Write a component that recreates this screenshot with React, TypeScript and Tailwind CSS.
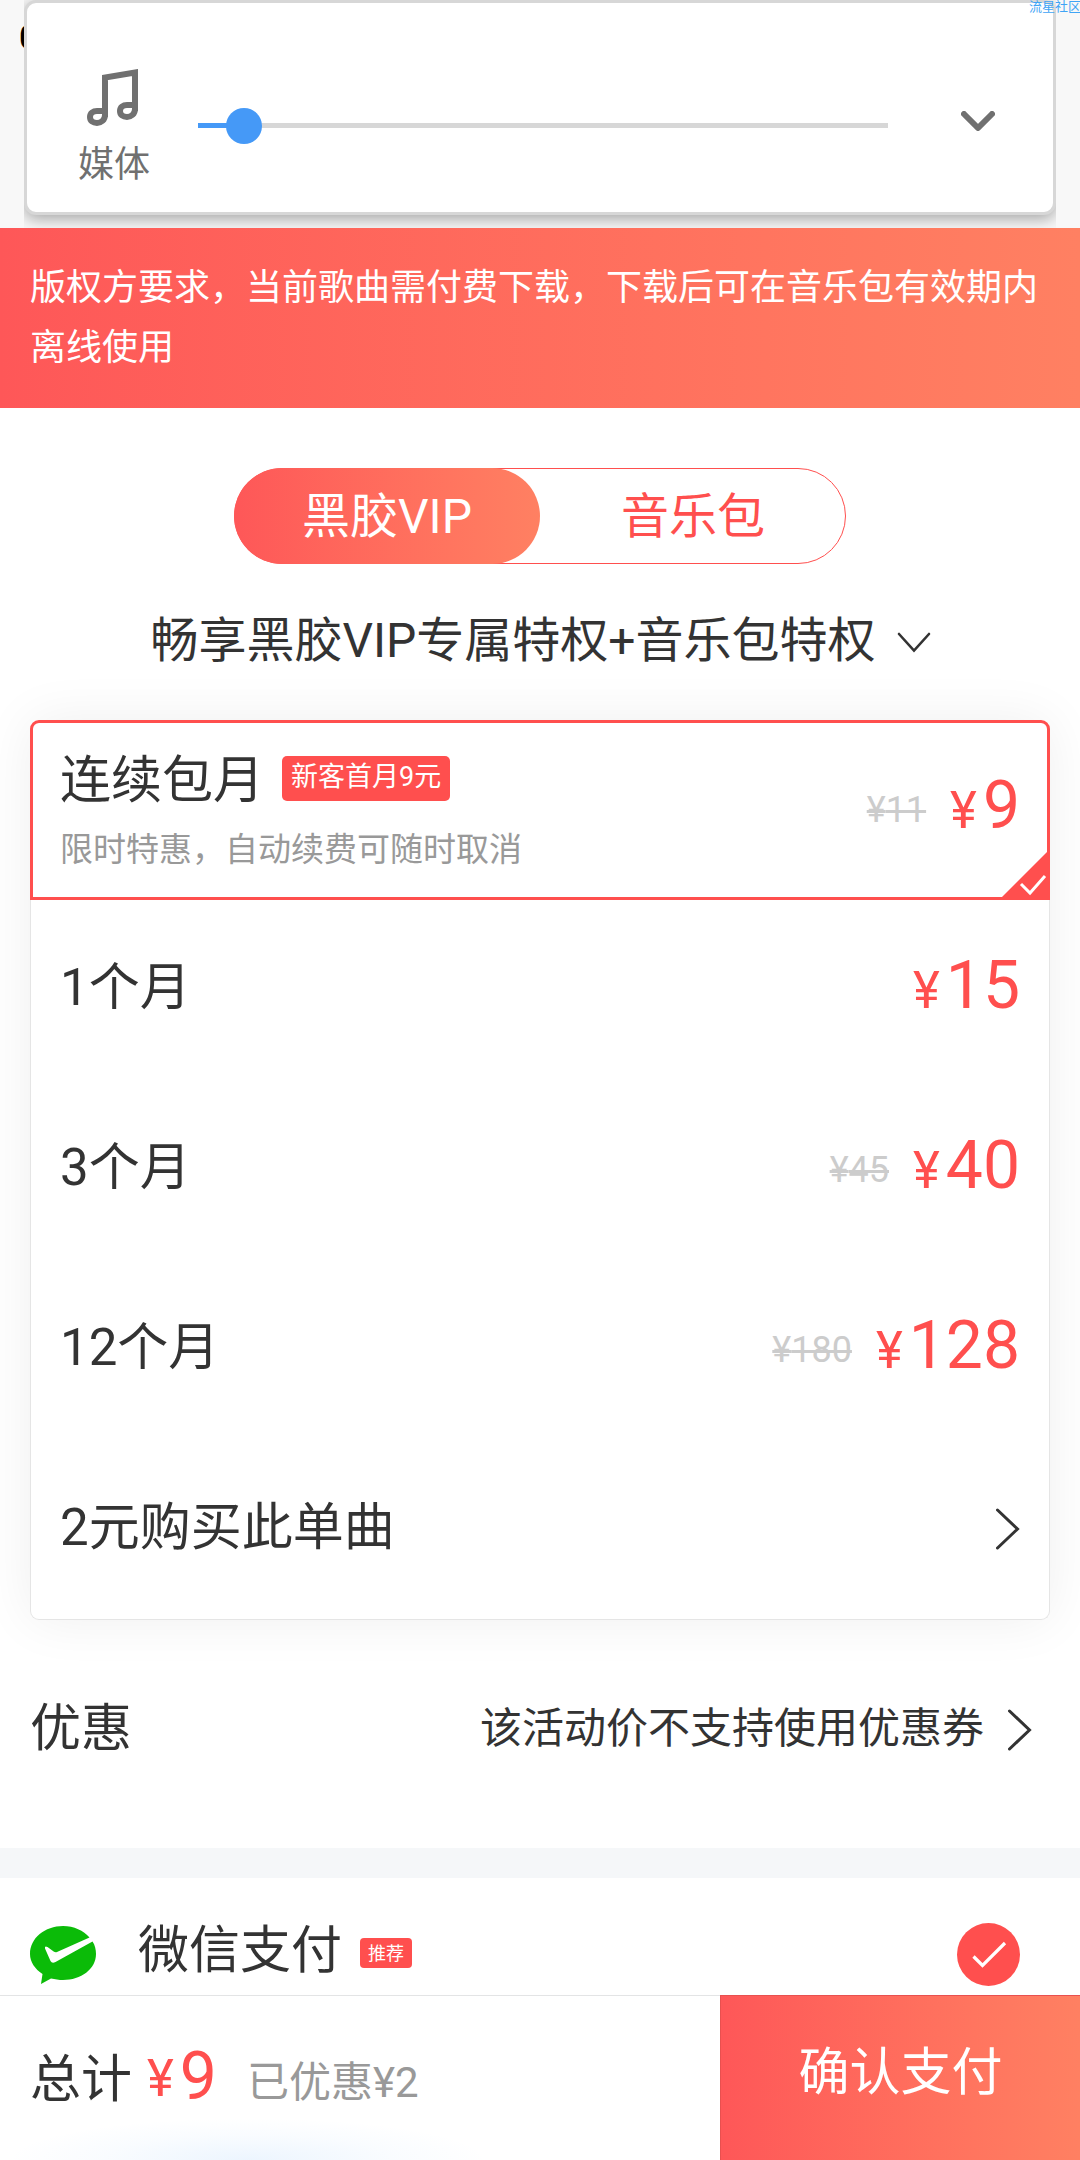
import React from 'react'

const plans = [
  { name: '1个月', price: '15' },
  { name: '3个月', oldPrice: '45', price: '40' },
  { name: '12个月', oldPrice: '180', price: '128' },
]

function Price({ value, oldValue }: { value: string; oldValue?: string }) {
  return (
    <div className="flex items-baseline leading-[72px]">
      {oldValue && (
        <span className="mr-6 text-[36px] text-[#ccc] line-through decoration-[3px] -translate-y-[6px]">¥{oldValue}</span>
      )}
      <span className="mr-[6px] text-[51px] text-[#ff4f4e]">¥</span>
      <span className="text-[66px] text-[#ff4f4e]">{value}</span>
    </div>
  )
}

function ChevronRight() {
  return (
    <svg width="24" height="42" viewBox="0 0 24 42" fill="none" stroke="#333" strokeWidth="3" strokeLinecap="round">
      <path d="M1.5 2 L21.5 21 L1.5 40" />
    </svg>
  )
}

function VolumePanel() {
  return (
    <div className="absolute left-6 top-0 h-[228px] w-[1032px] overflow-hidden bg-[#f8f8f8]">
      <div className="flex h-[215px] w-full items-start rounded-[12px] border-[3px] border-[#d7d7d7] bg-white shadow-[0_4px_16px_rgba(0,0,0,0.34)]">
        <div className="ml-[51px] mt-[66px] flex w-[72px] flex-col items-center">
          <svg className="-ml-[3px]" width="51" height="57" viewBox="0 0 51 57" fill="none" stroke="#707070" strokeWidth="6">
            <path d="M18 48 V8.5 L48 3.5 V42" />
            <path d="M18 42 V46 C18 51 14 54 10 54 C6 54 3 52 3 48 C3 44 6 42 10 42 Z" />
            <path d="M48 36 V40 C48 45 44 48 40 48 C36 48 33 46 33 42 C33 38 36 36 40 36 Z" />
          </svg>
          <span className="mt-[12px] text-[36px] leading-[54px] text-[#707070]">媒体</span>
        </div>
        <div className="relative ml-12 mt-[120px] h-[5px] w-[690px] bg-[#d7d7d7]">
          <div className="h-full w-[46px] bg-[#4599f7]" />
          <div className="absolute -top-[15px] left-7 size-9 rounded-full bg-[#4599f7]" />
        </div>
        <svg className="ml-[73px] mt-[108px]" width="34" height="20" viewBox="0 0 34 20" fill="none" stroke="#707070" strokeWidth="6" strokeLinecap="round" strokeLinejoin="round">
          <path d="M3 3 L17 17 L31 3" />
        </svg>
      </div>
    </div>
  )
}

function PlanCard() {
  return (
    <div className="mx-[30px] mt-[43px] h-[900px] rounded-[9px] bg-white shadow-[0_0_54px_rgba(0,0,0,0.065)]">
      <div className="relative flex h-[180px] justify-between rounded-t-[9px] border-[3px] border-[#ff4f4e] px-[27px]">
        <div className="pt-[20px]">
          <div className="flex items-start">
            <span className="text-[51px] leading-[76px] text-[#333]">连续包月</span>
            <span className="ml-[18px] mt-[13px] h-[45px] rounded-[5px] bg-[#ff4f4e] px-[9px] text-[27px] leading-[42px] text-white">
              新客首月9元
            </span>
          </div>
          <p className="mt-[6px] text-[33px] leading-[50px] text-[#999]">限时特惠，自动续费可随时取消</p>
        </div>
        <div className="pt-[47px]">
          <Price oldValue="11" value="9" />
        </div>
        <svg className="absolute -bottom-[1px] -right-[1px]" width="47" height="47" viewBox="0 0 47 47">
          <path d="M47 0 V47 H0 Z" fill="#ff4f4e" />
          <path d="M20 33 L29 42 L44 25" fill="none" stroke="#fff" strokeWidth="3" />
        </svg>
      </div>
      <div className="rounded-b-[9px] border border-t-0 border-[#e5e5e5]">
        {plans.map((plan) => (
          <div key={plan.name} className="flex h-[180px] justify-between px-[29px]">
            <span className="pt-[50px] text-[51px] leading-[76px] text-[#333]">{plan.name}</span>
            <div className="pt-[50px]">
              <Price oldValue={plan.oldPrice} value={plan.price} />
            </div>
          </div>
        ))}
        <div className="flex h-[179px] items-start justify-between px-[29px]">
          <span className="pt-[50px] text-[51px] leading-[76px] text-[#333]">2元购买此单曲</span>
          <div className="pt-[68px]">
            <ChevronRight />
          </div>
        </div>
      </div>
    </div>
  )
}

export default function App() {
  return (
    <div className="relative flex h-[2160px] w-[1080px] flex-col overflow-hidden bg-white font-[Roboto,'Noto_Sans_CJK_SC',sans-serif]">
      <header className="relative h-[228px] shrink-0 bg-[#f8f8f8]">
        <span className="absolute left-[19px] top-[17px] text-[34px] font-medium leading-[40px] text-black">0</span>
        <VolumePanel />
        <span className="absolute left-[1029px] top-0 whitespace-nowrap text-[13px] leading-[13px] text-[#3fa4f5]">流星社区</span>
      </header>

      <div className="h-[180px] shrink-0 bg-linear-to-r from-[#fe5758] to-[#ff8062] px-[30px] pt-[30px] text-[36px] leading-[60px] text-white">
        版权方要求，当前歌曲需付费下载，下载后可在音乐包有效期内离线使用
      </div>

      <div className="mx-auto mt-[60px] flex h-[96px] w-[612px] shrink-0 rounded-full border border-[#ff4f4e] text-[48px] leading-[94px]">
        <div className="-my-px -ml-px w-[306px] rounded-full bg-linear-to-r from-[#fe5758] to-[#ff8062] pt-[2px] text-center text-white">
          黑胶VIP
        </div>
        <div className="flex-1 pl-px pt-px text-center text-[#ff4f4e]">音乐包</div>
      </div>

      <div className="mt-[41px] flex h-[72px] shrink-0 items-center justify-center pl-px text-[48px] leading-[72px] text-[#333]">
        畅享黑胶VIP专属特权+音乐包特权
        <svg className="ml-[21px] mt-[2px]" width="34" height="21" viewBox="0 0 34 21" fill="none" stroke="#333" strokeWidth="2.6" strokeLinecap="round">
          <path d="M2 2 L17 18.5 L32 2" />
        </svg>
      </div>

      <PlanCard />

      <div className="flex h-[228px] shrink-0 items-start justify-between pl-[30px] pr-[48px] text-[#333]">
        <span className="pt-[71px] text-[51px] leading-[76px]">优惠</span>
        <div className="flex items-start gap-6 pt-[77px]">
          <span className="text-[42px] leading-[63px]">该活动价不支持使用优惠券</span>
          <div className="pt-[12px]">
            <ChevronRight />
          </div>
        </div>
      </div>

      <div className="h-[30px] shrink-0 bg-[#f5f7f9]" />

      <div className="flex h-[117px] shrink-0 items-start pl-[30px] pr-[60px]">
        <svg className="mt-12" width="66" height="58" viewBox="0 0 66 58">
          <path
            d="M33 0 C44 0 53.5 4.5 59.5 11.5 L27 26 Q25.5 26.6 24 25.8 L17.5 21 Q14.5 19.5 15 22.5 L20.5 35 Q22 38 25.5 36 L62.5 15.5 C65 19 66 23.5 66 28 C66 43 51 54 33 54 C29 54 25 53.4 21 52.5 L11 58 L12.5 48 C5 43 0 36 0 28 C0 12 15 0 33 0 Z"
            fill="#0bbb08"
          />
        </svg>
        <span className="ml-[42px] mt-[35px] text-[51px] leading-[76px] text-[#333]">微信支付</span>
        <span className="ml-[18px] mt-[60px] h-[30px] rounded-[4px] bg-[#ff4f4e] px-[8px] text-[18px] leading-[31px] text-white">推荐</span>
        <svg className="ml-auto mt-[45px]" width="63" height="63" viewBox="0 0 63 63">
          <circle cx="31.5" cy="31.5" r="31.5" fill="#ff4f4e" />
          <path d="M16.5 33.5 L25.5 42.5 L48 20" fill="none" stroke="#fff" strokeWidth="3.2" />
        </svg>
      </div>

      <footer className="flex h-[165px] shrink-0">
        <div className="relative flex flex-1 items-start overflow-hidden border-t border-[#e3e4e5] pl-[30px] leading-[76px]">
          <div className="absolute -bottom-[42px] left-[8px] h-[84px] w-[480px] bg-[radial-gradient(closest-side,rgba(70,160,250,0.1),rgba(70,160,250,0.03)_60%,transparent)]" />
          <span className="pt-[46px] text-[51px] text-[#333]">总计</span>
          <span className="ml-[15px] pt-[45px] text-[51px] text-[#ff4f4e]">¥</span>
          <span className="ml-[6px] pt-[43px] text-[66px] text-[#ff4f4e]">9</span>
          <span className="ml-[30px] pt-[49px] text-[42px] text-[#999]">已优惠¥2</span>
        </div>
        <button className="w-[360px] border-l border-t border-[#e8504f] bg-linear-to-r from-[#fe5758] to-[#ff8062] pb-[9px] text-[51px] text-white">
          确认支付
        </button>
      </footer>
    </div>
  )
}
